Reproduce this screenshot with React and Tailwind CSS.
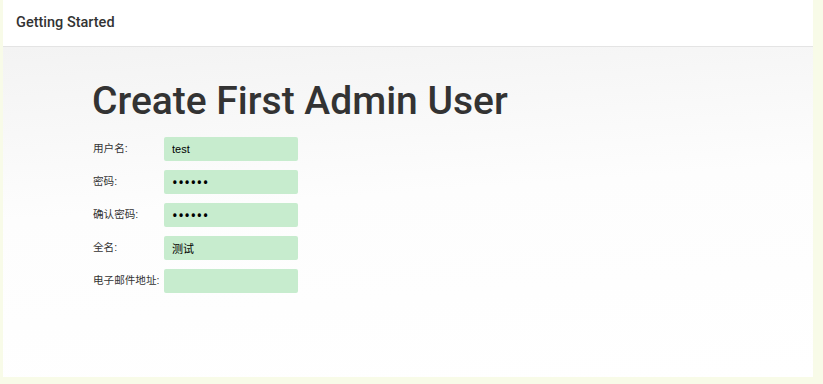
import React from 'react';

const fields = [
  { label: '用户名:', type: 'text', value: 'test' },
  { label: '密码:', type: 'password', value: '123456' },
  { label: '确认密码:', type: 'password', value: '123456' },
  { label: '全名:', type: 'text', value: '测试' },
  { label: '电子邮件地址:', type: 'text', value: '' },
];

export default function App() {
  return (
    <div className="w-[823px] h-[384px] bg-[#f8fbe8] pl-[3px] pr-[10px] pb-[7px]">
      <div className="h-full bg-white flex flex-col">
        <div className="h-[47px] shrink-0 flex items-center px-[13px] border-b border-[#e4e4e4]">
          <h1 className="text-[14.5px] font-medium text-[#333] font-['Roboto',sans-serif]">
            Getting Started
          </h1>
        </div>

        <div className="flex-1 bg-[linear-gradient(176deg,#f3f3f3_0%,#fdfdfd_45%,#ffffff_100%)] pl-[90px] pt-[30px]">
          <h2 className="-ml-[1px] text-[39px] leading-[48px] font-medium text-[#333] font-['Roboto',sans-serif]">
            Create First Admin User
          </h2>

          <div className="mt-[12px] flex flex-col gap-[9px]">
            {fields.map((f) => (
              <div key={f.label} className="flex items-start">
                <label className="w-[71px] pt-[3px] text-[10.6px] leading-[16px] text-[#333] font-['Liberation_Sans','Noto_Sans_CJK_SC',sans-serif] whitespace-nowrap">
                  {f.label}
                </label>
                <input
                  type={f.type}
                  defaultValue={f.value}
                  readOnly
                  className={
                    f.type === 'password'
                      ? 'w-[134px] h-[24px] bg-[#c7ecce] rounded-[2px] px-[8px] text-[15px] tracking-[0.5px] text-black outline-none font-[\'Liberation_Sans\',sans-serif]'
                      : 'w-[134px] h-[24px] bg-[#c7ecce] rounded-[2px] px-[8px] text-[11px] text-black outline-none font-[\'Liberation_Sans\',\'Noto_Sans_CJK_SC\',sans-serif]'
                  }
                />
              </div>
            ))}
          </div>
        </div>
      </div>
    </div>
  );
}
